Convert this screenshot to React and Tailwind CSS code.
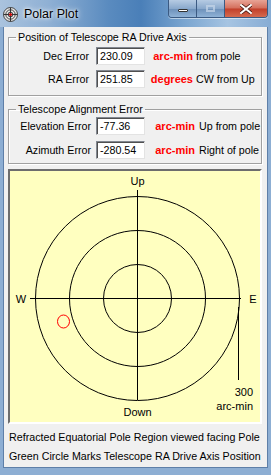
import React from "react";

const font = "font-['Liberation_Sans',Arial,sans-serif]";

const Box = ({ value }) => (
  <div className="w-[49px] h-[18px] bg-white border border-[#828790] border-b-[#e3e3e3] border-r-[#e3e3e3] shadow-[inset_1px_1px_0_#505050] pl-[3px] flex items-center text-[10.7px] text-black leading-none">
    {value}
  </div>
);

const TitleIcon = () => (
  <svg width="15" height="15" viewBox="0 0 15 15">
    <circle cx="7.5" cy="7.5" r="7" fill="#e8e8e8" stroke="#444" strokeWidth="1" />
    <circle cx="7.5" cy="7.5" r="4.7" fill="none" stroke="#444" strokeWidth="1" />
    <circle cx="7.5" cy="7.5" r="2.4" fill="none" stroke="#444" strokeWidth="1" />
    <line x1="0.5" y1="7.5" x2="14.5" y2="7.5" stroke="#333" strokeWidth="1" />
    <line x1="7.5" y1="0.5" x2="7.5" y2="14.5" stroke="#333" strokeWidth="1" />
    <circle cx="7.5" cy="7.5" r="1.6" fill="#d01010" />
  </svg>
);

const TitleBar = () => (
  <div className="h-[27px] flex justify-between bg-[linear-gradient(90deg,#aac3de_0%,#8fb0d4_18%,#5a8bbf_40%,#4a7fb8_52%,#7aa5d0_68%,#a6c4e2_84%,#87acd4_100%)]">
    <div className="flex items-center gap-[6px] pl-[3px] pt-[1px]">
      <TitleIcon />
      <span className="text-[12.5px] text-black [text-shadow:0_0_6px_#ffffff,0_0_3px_#ffffff]">Polar Plot</span>
    </div>
    <div className="flex self-start mr-[3px] h-[18px] rounded-b-[4px] border border-t-0 border-[#3b5a82] overflow-hidden shadow-[0_1px_0_rgba(255,255,255,0.5)]">
      <div className="w-[28px] flex items-center justify-center border-r border-[#3b5a82] bg-[linear-gradient(180deg,#b6cbe3_0%,#8aa9cc_50%,#6d90b9_52%,#8fb2d6_100%)]">
        <div className="w-[10px] h-[3px] bg-white border border-[#333] rounded-[1px] mt-[4px]" />
      </div>
      <div className="w-[28px] flex items-center justify-center border-r border-[#3b5a82] bg-[linear-gradient(180deg,#b6cbe3_0%,#8aa9cc_50%,#6d90b9_52%,#8fb2d6_100%)]">
        <div className="w-[9px] h-[7px] border-[2px] border-[#c6d6e8] opacity-70" />
      </div>
      <div className="w-[42px] flex items-center justify-center bg-[linear-gradient(180deg,#e8a496_0%,#d46f5c_48%,#c23f2a_52%,#d56a4f_100%)]">
        <svg width="12" height="10" viewBox="0 0 12 10">
          <path d="M1 1 L11 9 M11 1 L1 9" stroke="#4a1a12" strokeWidth="3.6" strokeLinecap="square" />
          <path d="M1 1 L11 9 M11 1 L1 9" stroke="#ffffff" strokeWidth="2" strokeLinecap="square" />
        </svg>
      </div>
    </div>
  </div>
);

const Row = ({ label, labelW, value, unit, unitW, gap, rest }) => (
  <div className="flex items-center">
    <div className="text-right text-[10.7px] text-black" style={{ width: labelW }}>{label}</div>
    <div className="ml-auto" style={{ display: "none" }} />
    <div style={{ marginLeft: 95 - 8 - labelW }}>
      <Box value={value} />
    </div>
    <div className="text-right text-[11px] font-bold text-[#ff0000]" style={{ width: unitW }}>{unit}</div>
    <div className="text-[10.7px] text-black" style={{ marginLeft: gap }}>{rest}</div>
  </div>
);

const Plot = () => (
  <div className="h-[255px] border-2 border-t-[#6d6d6d] border-l-[#6d6d6d] border-b-[#ffffff] border-r-[#ffffff] bg-[#ffffc0]">
    <svg width="252" height="251" viewBox="2 2 252 251" className="block">
      <g fill="none" stroke="#000" strokeWidth="1">
        <circle cx="129.5" cy="129.5" r="34" />
        <circle cx="129.5" cy="129.5" r="68" />
        <circle cx="129.5" cy="129.5" r="102" />
        <line x1="22" y1="129.5" x2="233" y2="129.5" />
        <line x1="129.5" y1="21" x2="129.5" y2="231" />
        <line x1="230.5" y1="138" x2="230.5" y2="211" />
        <ellipse cx="55.5" cy="152.5" rx="6" ry="6.5" stroke="#ff0000" />
      </g>
      <g fontFamily="'Liberation Sans', Arial, sans-serif" fontSize="11" fill="#000">
        <text x="129.5" y="16" textAnchor="middle">Up</text>
        <text x="129.5" y="247" textAnchor="middle">Down</text>
        <text x="13" y="133.5" textAnchor="middle">W</text>
        <text x="245" y="133.5" textAnchor="middle">E</text>
        <text x="245" y="227" textAnchor="end">300</text>
        <text x="245" y="241" textAnchor="end">arc-min</text>
      </g>
    </svg>
  </div>
);

export default function App() {
  return (
    <div className={`w-[271px] h-[475px] flex flex-col bg-[#8daed3] ${font}`}>
      <TitleBar />
      <div className="flex-1 mx-[3px] mb-[7px] bg-[#f0f0f0] border border-[#5e7fa8] border-t-0 px-[4px] pt-[3px] flex flex-col">
        <fieldset className="border border-[#a0a0a0] shadow-[inset_1px_1px_0_#ffffff,1px_1px_0_#ffffff] pb-[7px] mr-[1px]">
          <legend className="ml-[7px] px-[2px] text-[10.7px] leading-[14px] text-black">Position of Telescope RA Drive Axis</legend>
          <div className="flex flex-col gap-[5px] mt-[3px]">
            <Row label="Dec Error" labelW={80} value="230.09" unit="arc-min" unitW={48} gap={3} rest="from pole" />
            <Row label="RA Error" labelW={80} value="251.85" unit="degrees" unitW={48} gap={3} rest="CW from Up" />
          </div>
        </fieldset>
        <fieldset className="border border-[#a0a0a0] shadow-[inset_1px_1px_0_#ffffff,1px_1px_0_#ffffff] pb-[4px] mt-[6px] mr-[1px]">
          <legend className="ml-[7px] px-[2px] text-[10.7px] leading-[14px] text-black">Telescope Alignment Error</legend>
          <div className="flex flex-col gap-[6px] mt-[1px]">
            <Row label="Elevation Error" labelW={82} value="-77.36" unit="arc-min" unitW={50} gap={4} rest="Up from pole" />
            <Row label="Azimuth Error" labelW={82} value="-280.54" unit="arc-min" unitW={50} gap={4} rest="Right of pole" />
          </div>
        </fieldset>
        <div className="mt-[5px] mr-[1px]">
          <Plot />
        </div>
        <div className="mt-[7px] flex flex-col gap-[6px] text-[10.7px] leading-[13px] text-black pl-[1px]">
          <div>Refracted Equatorial Pole Region viewed facing Pole</div>
          <div>Green Circle Marks Telescope RA Drive Axis Position</div>
        </div>
      </div>
    </div>
  );
}
